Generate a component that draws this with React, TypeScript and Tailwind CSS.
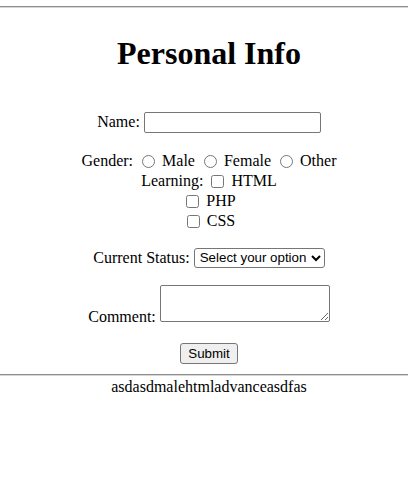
export default function App() {
  return (
    <div className="min-h-[478px] bg-white font-['Liberation_Serif',serif] text-[16px] leading-[18px] text-black">
      <div className="h-[6px]" />
      <hr className="border-0 border-t border-b border-t-[#8e8e8e] border-b-[#d6d6d6]" />

      <div className="pl-[10px] text-center">
        <h1 className="mt-[27px] text-[32px] leading-[37px] font-bold">Personal Info</h1>

        <form onSubmit={(e) => e.preventDefault()}>
          <div className="mt-[38px] flex h-[24px] items-center justify-center">
            <label htmlFor="name">Name:</label>
            <input
              id="name"
              type="text"
              className="ml-[4px] h-[21px] w-[177px] rounded-[2px] border border-[#767676] px-[2px] text-[13px]"
            />
          </div>

          <div className="mt-[17px] flex h-[20px] items-center justify-center">
            <span>Gender:</span>
            <input type="radio" name="gender" className="mr-[7px] ml-[9px] h-[13px] w-[13px]" />
            <span>Male</span>
            <input type="radio" name="gender" className="mr-[7px] ml-[9px] h-[13px] w-[13px]" />
            <span>Female</span>
            <input type="radio" name="gender" className="mr-[7px] ml-[9px] h-[13px] w-[13px]" />
            <span>Other</span>
          </div>

          <div className="flex h-[20px] items-center justify-center">
            <span>Learning:</span>
            <input type="checkbox" className="mr-[7px] ml-[8px] h-[13px] w-[13px]" />
            <span>HTML</span>
          </div>
          <div className="flex h-[20px] items-center justify-center">
            <input type="checkbox" className="mr-[7px] ml-[4px] h-[13px] w-[13px]" />
            <span>PHP</span>
          </div>
          <div className="flex h-[20px] items-center justify-center">
            <input type="checkbox" className="mr-[7px] ml-[4px] h-[13px] w-[13px]" />
            <span>CSS</span>
          </div>

          <div className="mt-[16px] flex h-[21px] items-center justify-center">
            <label htmlFor="status">Current Status:</label>
            <select
              id="status"
              defaultValue=""
              className="ml-[4px] h-[20px] w-[131px] rounded-[3px] border border-[#767676] pl-[1px] font-['Liberation_Sans',sans-serif] text-[13.33px]"
            >
              <option value="">Select your option</option>
              <option value="student">Student</option>
              <option value="working">Working</option>
            </select>
          </div>

          <div className="mt-[17px] flex items-end justify-center">
            <label htmlFor="comment" className="leading-[18px]">Comment:</label>
            <textarea
              id="comment"
              className="mb-[4px] ml-[4px] h-[37px] w-[170px] rounded-[2px] border border-[#767676]"
            />
          </div>

          <div className="mt-[17px] flex justify-center">
            <button
              type="submit"
              className="h-[21px] w-[58px] rounded-[3px] border border-[#767676] bg-[#efefef] font-['Liberation_Sans',sans-serif] text-[13.33px] leading-[15px]"
            >
              Submit
            </button>
          </div>
        </form>
      </div>

      <hr className="mt-[10px] border-0 border-t border-b border-t-[#8e8e8e] border-b-[#d6d6d6]" />
      <p className="pl-[10px] pt-[2px] text-center">asdasdmalehtmladvanceasdfas</p>
    </div>
  );
}
